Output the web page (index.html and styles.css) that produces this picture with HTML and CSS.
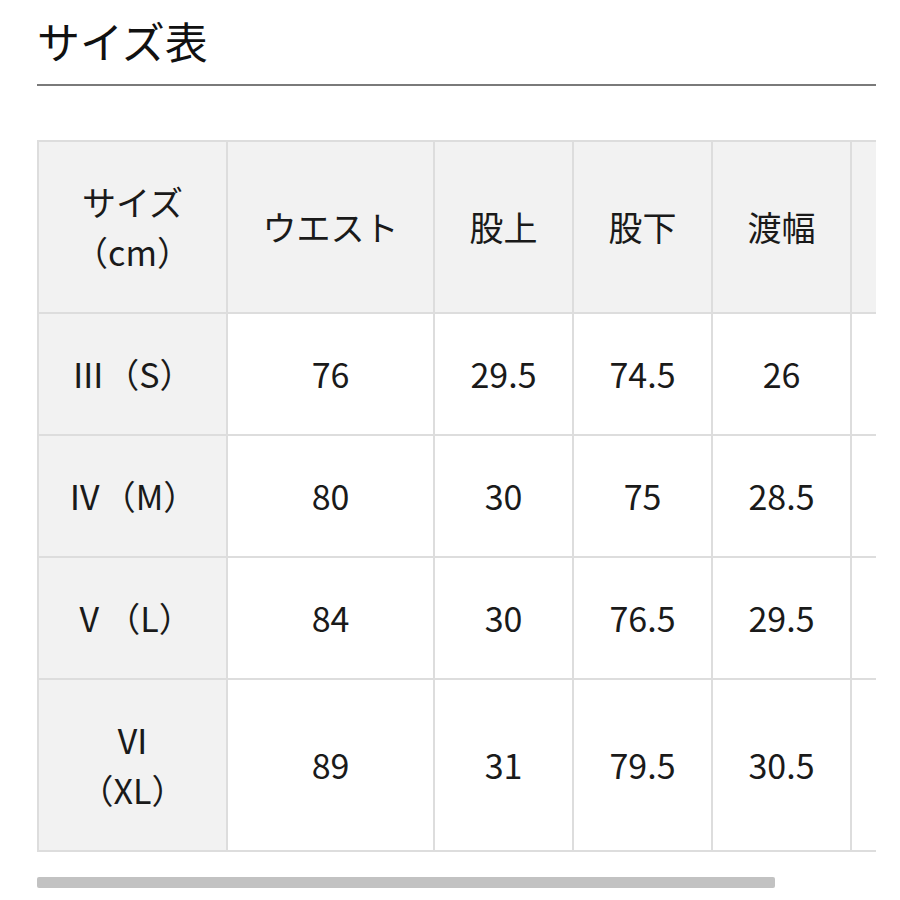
FILE: index.html
```html
<!DOCTYPE html>
<html lang="ja">
<head>
<meta charset="utf-8">
<title>サイズ表</title>
<link rel="stylesheet" href="styles.css">
</head>
<body>
<div class="page">
  <h1 class="title">サイズ表</h1>
  <div class="scroller">
    <table class="size-table">
      <colgroup>
        <col class="c-size">
        <col class="c-waist">
        <col class="c-std">
        <col class="c-std">
        <col class="c-std">
        <col class="c-last">
      </colgroup>
      <thead>
        <tr>
          <th>サイズ<br>（cm）</th>
          <th>ウエスト</th>
          <th>股上</th>
          <th>股下</th>
          <th>渡幅</th>
          <th></th>
        </tr>
      </thead>
      <tbody>
        <tr><th>Ⅲ（S）</th><td>76</td><td>29.5</td><td>74.5</td><td>26</td><td></td></tr>
        <tr><th>Ⅳ（M）</th><td>80</td><td>30</td><td>75</td><td>28.5</td><td></td></tr>
        <tr><th>Ⅴ（L）</th><td>84</td><td>30</td><td>76.5</td><td>29.5</td><td></td></tr>
        <tr><th>Ⅵ<br>（XL）</th><td>89</td><td>31</td><td>79.5</td><td>30.5</td><td></td></tr>
      </tbody>
    </table>
  </div>
  <div class="scroll-track"><div class="scroll-thumb"></div></div>
</div>
</body>
</html>
```

FILE: styles.css
```css
html, body {
  margin: 0;
  padding: 0;
  background: #ffffff;
}

body {
  font-family: "Noto Sans CJK JP", sans-serif;
  color: #1a1a1a;
}

.page {
  padding: 9px 24px 0 37px;
  width: 839px;
}

.title {
  margin: 0;
  font-size: 43px;
  font-weight: 400;
  line-height: 63px;
  padding-bottom: 12px;
  border-bottom: 2px solid #7a7a7a;
  color: #111111;
}

.scroller {
  margin-top: 54px;
  width: 839px;
  overflow: hidden;
}

.size-table {
  border-collapse: collapse;
  table-layout: fixed;
  width: 954px;
}

.c-size { width: 189px; }
.c-waist { width: 207px; }
.c-std { width: 139px; }
.c-last { width: 141px; }

.size-table th,
.size-table td {
  border: 2px solid #dddddd;
  padding: 35px 4px;
  font-size: 34px;
  line-height: 50px;
  font-weight: 400;
  text-align: center;
  vertical-align: middle;
  white-space: nowrap;
}

.size-table thead th,
.size-table tbody th {
  background: #f2f2f2;
}

.size-table td {
  background: #ffffff;
}

.scroll-track {
  margin-top: 25px;
  height: 11px;
  width: 839px;
}

.scroll-thumb {
  width: 738px;
  height: 11px;
  background: #c2c2c2;
  border-radius: 2px;
}
```
